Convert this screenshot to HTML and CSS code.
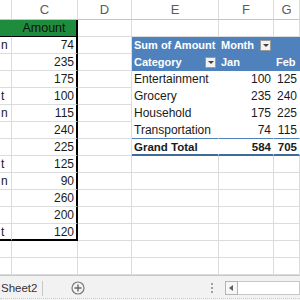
FILE: index.html
```html
<!DOCTYPE html>
<html lang="en">
<head>
    <meta charset="UTF-8">
    <title>Sheet2 - Pivot</title>
    <link rel="stylesheet" href="styles.css">
</head>
<body>
    <div class="sheet">
        <!-- column headers -->
        <div class="hd"></div>
        <div class="hd">C</div>
        <div class="hd">D</div>
        <div class="hd">E</div>
        <div class="hd">F</div>
        <div class="hd last">G</div>

        <!-- row 1 -->
        <div class="c green head-b"></div>
        <div class="c green head-c">Amount</div>
        <div class="c"></div>
        <div class="c"></div>
        <div class="c"></div>
        <div class="c last"></div>

        <!-- row 2 -->
        <div class="c tb">n</div>
        <div class="c num tc">74</div>
        <div class="c"></div>
        <div class="c pv pv-head">Sum of Amount</div>
        <div class="c pv pv-head drop">Month <span class="dd"></span></div>
        <div class="c pv pv-head last"></div>

        <!-- row 3 -->
        <div class="c tb"></div>
        <div class="c num tc">235</div>
        <div class="c"></div>
        <div class="c pv pv-head drop">Category <span class="dd"></span></div>
        <div class="c pv pv-head">Jan</div>
        <div class="c pv pv-head last">Feb</div>

        <!-- row 4 -->
        <div class="c tb"></div>
        <div class="c num tc">175</div>
        <div class="c"></div>
        <div class="c pv">Entertainment</div>
        <div class="c pv num">100</div>
        <div class="c pv num last">125</div>

        <!-- row 5 -->
        <div class="c tb">t</div>
        <div class="c num tc">100</div>
        <div class="c"></div>
        <div class="c pv">Grocery</div>
        <div class="c pv num">235</div>
        <div class="c pv num last">240</div>

        <!-- row 6 -->
        <div class="c tb">n</div>
        <div class="c num tc">115</div>
        <div class="c"></div>
        <div class="c pv">Household</div>
        <div class="c pv num">175</div>
        <div class="c pv num last">225</div>

        <!-- row 7 -->
        <div class="c tb"></div>
        <div class="c num tc">240</div>
        <div class="c"></div>
        <div class="c pv pv-line">Transportation</div>
        <div class="c pv pv-line num">74</div>
        <div class="c pv pv-line num last">115</div>

        <!-- row 8 -->
        <div class="c tb"></div>
        <div class="c num tc">225</div>
        <div class="c"></div>
        <div class="c pv pv-total">Grand Total</div>
        <div class="c pv pv-total num">584</div>
        <div class="c pv pv-total num last">705</div>

        <!-- row 9 -->
        <div class="c tb">t</div>
        <div class="c num tc">125</div>
        <div class="c"></div>
        <div class="c"></div>
        <div class="c"></div>
        <div class="c last"></div>

        <!-- row 10 -->
        <div class="c tb">n</div>
        <div class="c num tc">90</div>
        <div class="c"></div>
        <div class="c"></div>
        <div class="c"></div>
        <div class="c last"></div>

        <!-- row 11 -->
        <div class="c tb"></div>
        <div class="c num tc">260</div>
        <div class="c"></div>
        <div class="c"></div>
        <div class="c"></div>
        <div class="c last"></div>

        <!-- row 12 -->
        <div class="c tb"></div>
        <div class="c num tc">200</div>
        <div class="c"></div>
        <div class="c"></div>
        <div class="c"></div>
        <div class="c last"></div>

        <!-- row 13 -->
        <div class="c tb end-b">t</div>
        <div class="c num tc end-c">120</div>
        <div class="c"></div>
        <div class="c"></div>
        <div class="c"></div>
        <div class="c last"></div>

        <!-- row 14 -->
        <div class="c"></div>
        <div class="c"></div>
        <div class="c"></div>
        <div class="c"></div>
        <div class="c"></div>
        <div class="c last"></div>

        <!-- row 15 -->
        <div class="c"></div>
        <div class="c"></div>
        <div class="c"></div>
        <div class="c"></div>
        <div class="c"></div>
        <div class="c last"></div>
    </div>

    <div class="tabs">
        <div class="tab">Sheet2</div>
        <span class="sep"></span>
        <svg class="add" width="14" height="14" viewBox="0 0 14 14">
            <circle cx="7" cy="7" r="6" fill="none" stroke="#7a7a7a" stroke-width="1.2"/>
            <path d="M7 3.5v7M3.5 7h7" stroke="#6a6a6a" stroke-width="1.4"/>
        </svg>
        <span class="grip"><i></i><i></i><i></i></span>
        <div class="hscroll">
            <span class="arrow"></span>
            <div class="track"></div>
        </div>
    </div>
</body>
</html>
```

FILE: styles.css
```css
html, body {
    margin: 0;
    padding: 0;
    background: #fff;
    overflow: hidden;
}
body {
    font-family: "Liberation Sans", Arial, sans-serif;
    font-size: 12px;
    color: #1a1a1a;
    width: 300px;
    height: 300px;
}
.sheet {
    display: grid;
    grid-template-columns: 12px 66px 54px 87px 55px 26px;
    grid-template-rows: 20px;
    grid-auto-rows: 17px;
    height: 275px;
    overflow: hidden;
}
.hd {
    box-sizing: border-box;
    border-right: 1px solid #dadcdd;
    border-bottom: 1px solid #c4c4c4;
    color: #5b5b5b;
    font-size: 13px;
    text-align: center;
    line-height: 20px;
}
.c {
    box-sizing: border-box;
    border-right: 1px solid #dadcdd;
    border-bottom: 1px solid #dadcdd;
    line-height: 17px;
    padding: 0 2px;
    white-space: nowrap;
    overflow: hidden;
}
.num {
    text-align: right;
    padding-right: 2px;
}
.last {
    border-right-color: #dadcdd;
}

/* source table in B:C */
.green {
    background: #1f8b3d;
    color: #111;
}
.head-b {
    border-bottom: 1px solid #000;
    border-right-color: #1f8b3d;
}
.head-c {
    border-bottom: 1px solid #000;
    border-right: 2px solid #000;
    text-align: center;
    font-size: 12.5px;
}
.tb {
    padding: 0 0 0 1px;
}
.tc {
    border-right: 2px solid #000;
}
.end-b, .end-c {
    border-bottom: 2px solid #000;
}

/* pivot table in E:G */
.pv {
    border-right-color: transparent;
    border-bottom-color: transparent;
}
.pv-head {
    background: #4f81bd;
    color: #fff;
    font-weight: bold;
    font-size: 11px;
}
.drop {
    display: flex;
    justify-content: space-between;
    align-items: center;
}
.dd {
    box-sizing: border-box;
    width: 11px;
    height: 11px;
    background: #f2f2f2;
    border: 1px solid #9a9a9a;
    position: relative;
}
.dd::after {
    content: "";
    position: absolute;
    left: 2px;
    top: 3px;
    border-left: 3px solid transparent;
    border-right: 3px solid transparent;
    border-top: 3px solid #404040;
}
.pv-line {
    border-bottom: 1px solid #4f81bd;
}
.pv-total {
    font-weight: bold;
    font-size: 11.5px;
    border-bottom: 2px solid #3f6a9c;
}

/* sheet tabs + scrollbar */
.tabs {
    box-sizing: border-box;
    height: 25px;
    background: #f2f2f2;
    border-top: 1px solid #c6c6c6;
    display: flex;
    align-items: center;
    position: relative;
}
.tabs::after {
    content: "";
    position: absolute;
    left: 0;
    right: 0;
    bottom: 1px;
    border-bottom: 1px dotted #cfcfcf;
}
.tab {
    font-size: 11.5px;
    color: #333;
    padding-left: 1px;
    width: 41px;
}
.sep {
    width: 1px;
    height: 15px;
    background: #c8c8c8;
}
.add {
    margin-left: 28px;
}
.grip {
    margin-left: 126px;
    display: flex;
    flex-direction: column;
    gap: 2px;
}
.grip i {
    display: block;
    width: 2px;
    height: 2px;
    background: #a0a0a0;
}
.hscroll {
    margin-left: 12px;
    flex: 1;
    height: 14px;
    display: flex;
}
.arrow {
    box-sizing: border-box;
    width: 13px;
    height: 14px;
    background: #f7f7f7;
    border: 1px solid #b4b4b4;
    position: relative;
}
.arrow::after {
    content: "";
    position: absolute;
    left: 3px;
    top: 3px;
    border-top: 3px solid transparent;
    border-bottom: 3px solid transparent;
    border-right: 4px solid #606060;
}
.track {
    flex: 1;
    box-sizing: border-box;
    height: 14px;
    background: #fff;
    border: 1px solid #c8c8c8;
    border-left: none;
}
```
